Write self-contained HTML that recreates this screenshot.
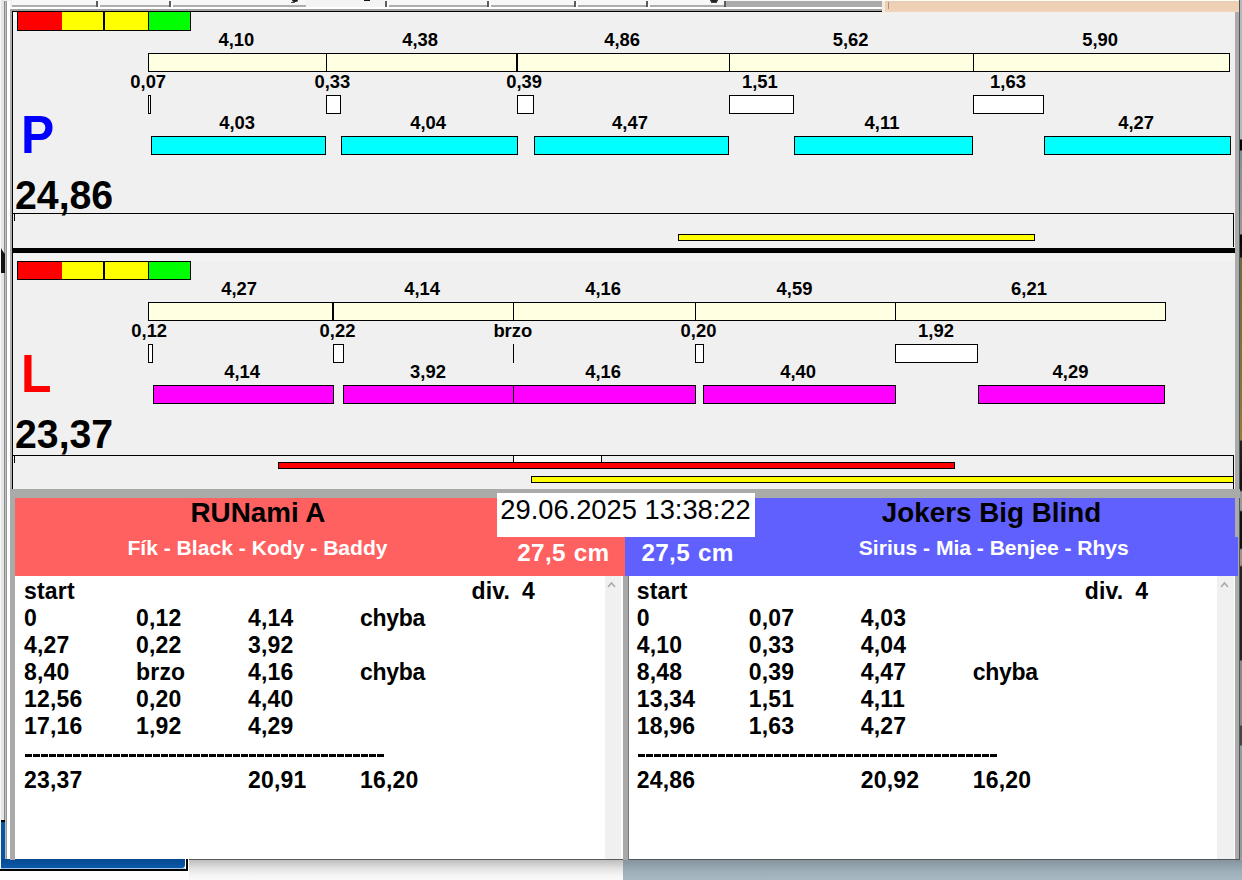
<!DOCTYPE html>
<html><head><meta charset="utf-8"><title>Flyball timing</title>
<style>
html,body{margin:0;padding:0;overflow:hidden}
body{width:1242px;height:880px;overflow:hidden;background:#f0f0f0;position:relative;font-family:"Liberation Sans",sans-serif;}
.t{position:absolute;white-space:pre;font-weight:bold;color:#000;line-height:1.15}
.sm{font-size:18.4px;transform:scaleX(1.0);}
.big{font-size:41px;transform-origin:0 0;transform:scaleX(0.957)}
.letter{font-size:53px;transform-origin:0 0;transform:scaleX(0.94)}
.title{font-size:27.8px}
.names{font-size:21.1px;color:#fff}
.cm{font-size:24.3px;color:#fff;letter-spacing:0.3px;word-spacing:1px}
.date{font-size:27.3px;font-weight:normal}
.body{font-size:23px;letter-spacing:0.2px;transform-origin:0 0;transform:scaleX(1.0);}
</style></head>
<body>
<div style="position:absolute;left:0px;top:0px;width:1px;height:880px;background:#f6f6f6;"></div>
<div style="position:absolute;left:1px;top:0px;width:3px;height:880px;background:#e6e6e6;"></div>
<div style="position:absolute;left:4px;top:1px;width:1px;height:859px;background:#8a8a8a;"></div>
<div style="position:absolute;left:5px;top:1px;width:1px;height:859px;background:#bdbdbd;"></div>
<div style="position:absolute;left:6px;top:1px;width:1px;height:859px;background:#999;"></div>
<div style="position:absolute;left:7px;top:1px;width:3px;height:859px;background:#fff;"></div>
<div style="position:absolute;left:10px;top:10px;width:2px;height:480px;background:#adadad;"></div>
<div style="position:absolute;left:12px;top:11px;width:1px;height:478px;background:#000;"></div>
<div style="position:absolute;left:1px;top:248px;width:4px;height:25px;background:#111;clip-path:polygon(0 0,40% 3px,100% 6px,100% 100%,0 100%)"></div>
<div style="position:absolute;left:12px;top:0px;width:870px;height:5px;background:#f7f7f7;"></div>
<div style="position:absolute;left:12px;top:5px;width:870px;height:2px;background:#adadad;"></div>
<div style="position:absolute;left:306px;top:0px;width:81px;height:7px;background:#f4f4f4;"></div>
<div style="position:absolute;left:96px;top:1px;width:2px;height:6px;background:#5c5c5c;"></div>
<div style="position:absolute;left:98px;top:1px;width:2px;height:6px;background:#fcfcfc;"></div>
<div style="position:absolute;left:169px;top:1px;width:2px;height:6px;background:#5c5c5c;"></div>
<div style="position:absolute;left:171px;top:1px;width:2px;height:6px;background:#fcfcfc;"></div>
<div style="position:absolute;left:385px;top:1px;width:2px;height:6px;background:#5c5c5c;"></div>
<div style="position:absolute;left:387px;top:1px;width:2px;height:6px;background:#fcfcfc;"></div>
<div style="position:absolute;left:487px;top:1px;width:2px;height:6px;background:#5c5c5c;"></div>
<div style="position:absolute;left:489px;top:1px;width:2px;height:6px;background:#fcfcfc;"></div>
<div style="position:absolute;left:574px;top:1px;width:2px;height:6px;background:#5c5c5c;"></div>
<div style="position:absolute;left:576px;top:1px;width:2px;height:6px;background:#fcfcfc;"></div>
<div style="position:absolute;left:646px;top:1px;width:2px;height:6px;background:#5c5c5c;"></div>
<div style="position:absolute;left:648px;top:1px;width:2px;height:6px;background:#fcfcfc;"></div>
<div style="position:absolute;left:724px;top:1px;width:2px;height:6px;background:#5c5c5c;"></div>
<div style="position:absolute;left:726px;top:1px;width:2px;height:6px;background:#fcfcfc;"></div>
<div style="position:absolute;left:726px;top:1px;width:156px;height:6px;background:#ababab;"></div>
<div style="position:absolute;left:10px;top:7px;width:872px;height:2px;background:#fff;"></div>
<div style="position:absolute;left:10px;top:9px;width:872px;height:2px;background:#a0a0a0;"></div>
<div style="position:absolute;left:12px;top:11px;width:870px;height:1px;background:#000;"></div>
<div style="position:absolute;left:292px;top:0px;width:6px;height:2px;background:#222;border-radius:0 0 3px 3px"></div>
<div style="position:absolute;left:291px;top:2px;width:4px;height:1px;background:#555;"></div>
<div style="position:absolute;left:364px;top:0px;width:6px;height:1px;background:#111;"></div>
<div style="position:absolute;left:710px;top:0px;width:8px;height:2px;background:#222;border-radius:0 0 4px 4px"></div>
<div style="position:absolute;left:711px;top:2px;width:6px;height:1px;background:#444;"></div>
<div style="position:absolute;left:882px;top:0px;width:358px;height:1px;background:#fffdf2;"></div>
<div style="position:absolute;left:882px;top:1px;width:3px;height:12px;background:#f6eadf;"></div>
<div style="position:absolute;left:885px;top:1px;width:355px;height:11px;background:#efd0b4;background:linear-gradient(#e6cdb8,#f0d0b2 40%,#efd0b4 80%,#ecd6c4)"></div>
<div style="position:absolute;left:883px;top:12px;width:357px;height:1px;background:#f8eee6;"></div>
<div style="position:absolute;left:888px;top:2px;width:1px;height:7px;background:#a89584;"></div>
<div style="position:absolute;left:1235px;top:12px;width:4px;height:848px;background:#ababab;"></div>
<div style="position:absolute;left:1239px;top:0px;width:1px;height:860px;background:#555;"></div>
<div style="position:absolute;left:1240px;top:0;width:2px;height:880px;background:linear-gradient(#b0b8c0 0,#b0b8c0 139px,#000 140px,#000 150px,#7890a0 151px,#8a9098 170px,#999 234px,#000 235px,#111 257px,#6e6840 258px,#807840 400px,#908030 440px,#222 441px,#111 490px,#999 492px,#999 510px,#111 512px,#111 548px,#a09090 550px,#a09090 565px,#222 567px,#222 660px,#888 661px,#888 725px,#444 726px,#444 745px,#909aa0 746px,#909aa0 858px,#98a8b4 860px,#a5b5c0 880px)"></div>
<div style="position:absolute;left:5px;top:859px;width:618px;height:1px;background:#5a5a5a;"></div>
<div style="position:absolute;left:0;top:860px;width:623px;height:20px;background:linear-gradient(#bebebe,#e4e4e4 45%,#f6f6f6 80%,#fafafa)"></div>
<div style="position:absolute;left:623px;top:859px;width:617px;height:1px;background:#555;"></div>
<div style="position:absolute;left:623px;top:860px;width:619px;height:20px;background:linear-gradient(#86949e,#9fb0bb 60%,#a7b7c2)"></div>
<div style="position:absolute;left:0px;top:871px;width:189px;height:10px;background:#fefcfc;"></div>
<div style="position:absolute;left:0px;top:859px;width:189px;height:12px;background:#fff;"></div>
<div style="position:absolute;left:1px;top:820px;width:4px;height:2px;background:#000;"></div>
<div style="position:absolute;left:1px;top:822px;width:4px;height:47px;background:#0b54a3;"></div>
<div style="position:absolute;left:1px;top:859px;width:184px;height:9px;background:#0b54a3;background:linear-gradient(#064a90,#0c58aa);border-radius:0 0 3px 0"></div>
<div style="position:absolute;left:1px;top:868px;width:184px;height:1px;background:#9cc4f0;"></div>
<div style="position:absolute;left:0px;top:869px;width:188px;height:2px;background:#000;"></div>
<div style="position:absolute;left:186px;top:859px;width:2px;height:12px;background:#000;"></div>
<div style="position:absolute;left:13px;top:12px;width:4px;height:8px;background:#fafafa;"></div>
<div style="position:absolute;left:17px;top:11px;width:174px;height:20px;background:#000;"></div>
<div style="position:absolute;left:18px;top:12px;width:44px;height:18px;background:#ff0000;"></div>
<div style="position:absolute;left:62px;top:12px;width:41px;height:18px;background:#ffff00;"></div>
<div style="position:absolute;left:105px;top:12px;width:43px;height:18px;background:#ffff00;"></div>
<div style="position:absolute;left:149px;top:12px;width:41px;height:18px;background:#00ff00;"></div>
<div style="position:absolute;left:148px;top:53px;width:1080px;height:17px;background:#ffffe1;border:1px solid #000;"></div>
<div style="position:absolute;left:326px;top:53px;width:1px;height:19px;background:#000;"></div>
<div style="position:absolute;left:516px;top:53px;width:2px;height:19px;background:#000;"></div>
<div style="position:absolute;left:729px;top:53px;width:1px;height:19px;background:#000;"></div>
<div style="position:absolute;left:973px;top:53px;width:1px;height:19px;background:#000;"></div>
<div class="t sm" style="left:86.4px;top:29px;width:300px;text-align:center;">4,10</div>
<div class="t sm" style="left:270.2px;top:29px;width:300px;text-align:center;">4,38</div>
<div class="t sm" style="left:472.20000000000005px;top:29px;width:300px;text-align:center;">4,86</div>
<div class="t sm" style="left:700.6px;top:29px;width:300px;text-align:center;">5,62</div>
<div class="t sm" style="left:950.2px;top:29px;width:300px;text-align:center;">5,90</div>
<div style="position:absolute;left:148px;top:95px;width:1px;height:17px;background:#fff;border:1px solid #000;"></div>
<div style="position:absolute;left:326px;top:95px;width:13px;height:17px;background:#fff;border:1px solid #000;"></div>
<div style="position:absolute;left:517px;top:95px;width:15px;height:17px;background:#fff;border:1px solid #000;"></div>
<div style="position:absolute;left:729px;top:95px;width:63px;height:17px;background:#fff;border:1px solid #000;"></div>
<div style="position:absolute;left:973px;top:95px;width:69px;height:17px;background:#fff;border:1px solid #000;"></div>
<div class="t sm" style="left:-1.8000000000000114px;top:71px;width:300px;text-align:center;">0,07</div>
<div class="t sm" style="left:182.39999999999998px;top:71px;width:300px;text-align:center;">0,33</div>
<div class="t sm" style="left:374.20000000000005px;top:71px;width:300px;text-align:center;">0,39</div>
<div class="t sm" style="left:609.9px;top:71px;width:300px;text-align:center;">1,51</div>
<div class="t sm" style="left:858px;top:71px;width:300px;text-align:center;">1,63</div>
<div style="position:absolute;left:151px;top:136px;width:173px;height:17px;background:#00ffff;border:1px solid #000;"></div>
<div style="position:absolute;left:341px;top:136px;width:175px;height:17px;background:#00ffff;border:1px solid #000;"></div>
<div style="position:absolute;left:534px;top:136px;width:193px;height:17px;background:#00ffff;border:1px solid #000;"></div>
<div style="position:absolute;left:794px;top:136px;width:177px;height:17px;background:#00ffff;border:1px solid #000;"></div>
<div style="position:absolute;left:1044px;top:136px;width:185px;height:17px;background:#00ffff;border:1px solid #000;"></div>
<div class="t sm" style="left:87.19999999999999px;top:112px;width:300px;text-align:center;">4,03</div>
<div class="t sm" style="left:278.2px;top:112px;width:300px;text-align:center;">4,04</div>
<div class="t sm" style="left:480px;top:112px;width:300px;text-align:center;">4,47</div>
<div class="t sm" style="left:732px;top:112px;width:300px;text-align:center;">4,11</div>
<div class="t sm" style="left:986.2px;top:112px;width:300px;text-align:center;">4,27</div>
<div class="t letter" style="left:20.7px;top:104.7px;color:#0000ff">P</div>
<div class="t big" style="left:15.3px;top:172.1px;">24,86</div>
<div style="position:absolute;left:17px;top:261px;width:174px;height:19px;background:#000;"></div>
<div style="position:absolute;left:18px;top:262px;width:44px;height:17px;background:#ff0000;"></div>
<div style="position:absolute;left:62px;top:262px;width:41px;height:17px;background:#ffff00;"></div>
<div style="position:absolute;left:105px;top:262px;width:43px;height:17px;background:#ffff00;"></div>
<div style="position:absolute;left:149px;top:262px;width:41px;height:17px;background:#00ff00;"></div>
<div style="position:absolute;left:148px;top:302px;width:1016px;height:17px;background:#ffffe1;border:1px solid #000;"></div>
<div style="position:absolute;left:332px;top:302px;width:2px;height:19px;background:#000;"></div>
<div style="position:absolute;left:513px;top:302px;width:1px;height:19px;background:#000;"></div>
<div style="position:absolute;left:695px;top:302px;width:1px;height:19px;background:#000;"></div>
<div style="position:absolute;left:895px;top:302px;width:1px;height:19px;background:#000;"></div>
<div class="t sm" style="left:89.19999999999999px;top:278px;width:300px;text-align:center;">4,27</div>
<div class="t sm" style="left:272.2px;top:278px;width:300px;text-align:center;">4,14</div>
<div class="t sm" style="left:453.20000000000005px;top:278px;width:300px;text-align:center;">4,16</div>
<div class="t sm" style="left:644.5px;top:278px;width:300px;text-align:center;">4,59</div>
<div class="t sm" style="left:879px;top:278px;width:300px;text-align:center;">6,21</div>
<div style="position:absolute;left:148px;top:344px;width:3px;height:17px;background:#fff;border:1px solid #000;"></div>
<div style="position:absolute;left:333px;top:344px;width:9px;height:17px;background:#fff;border:1px solid #000;"></div>
<div style="position:absolute;left:513px;top:344px;width:1px;height:19px;background:#000;"></div>
<div style="position:absolute;left:695px;top:344px;width:7px;height:17px;background:#fff;border:1px solid #000;"></div>
<div style="position:absolute;left:895px;top:344px;width:81px;height:17px;background:#fff;border:1px solid #000;"></div>
<div class="t sm" style="left:-0.8000000000000114px;top:320px;width:300px;text-align:center;">0,12</div>
<div class="t sm" style="left:187.5px;top:320px;width:300px;text-align:center;">0,22</div>
<div class="t sm" style="left:362.79999999999995px;top:320px;width:300px;text-align:center;">brzo</div>
<div class="t sm" style="left:548.5px;top:320px;width:300px;text-align:center;">0,20</div>
<div class="t sm" style="left:786px;top:320px;width:300px;text-align:center;">1,92</div>
<div style="position:absolute;left:153px;top:385px;width:179px;height:17px;background:#ff00ff;border:1px solid #000;"></div>
<div style="position:absolute;left:343px;top:385px;width:169px;height:17px;background:#ff00ff;border:1px solid #000;"></div>
<div style="position:absolute;left:513px;top:385px;width:181px;height:17px;background:#ff00ff;border:1px solid #000;"></div>
<div style="position:absolute;left:703px;top:385px;width:191px;height:17px;background:#ff00ff;border:1px solid #000;"></div>
<div style="position:absolute;left:978px;top:385px;width:185px;height:17px;background:#ff00ff;border:1px solid #000;"></div>
<div class="t sm" style="left:92.19999999999999px;top:361px;width:300px;text-align:center;">4,14</div>
<div class="t sm" style="left:278px;top:361px;width:300px;text-align:center;">3,92</div>
<div class="t sm" style="left:453.20000000000005px;top:361px;width:300px;text-align:center;">4,16</div>
<div class="t sm" style="left:648.2px;top:361px;width:300px;text-align:center;">4,40</div>
<div class="t sm" style="left:920.5px;top:361px;width:300px;text-align:center;">4,29</div>
<div class="t letter" style="left:20.7px;top:343.8px;color:#ff0000">L</div>
<div class="t big" style="left:15.3px;top:411.4px;">23,37</div>
<div style="position:absolute;left:13px;top:213px;width:1221px;height:1px;background:#000;"></div>
<div style="position:absolute;left:1233px;top:213px;width:1px;height:34px;background:#000;"></div>
<div style="position:absolute;left:14px;top:213px;width:1px;height:8px;background:#000;"></div>
<div style="position:absolute;left:678px;top:234px;width:355px;height:5px;background:#ffff00;border:1px solid #000;"></div>
<div style="position:absolute;left:13px;top:248px;width:1222px;height:5px;background:#000;"></div>
<div style="position:absolute;left:13px;top:254px;width:1222px;height:7px;background:#f3f3f3;"></div>
<div style="position:absolute;left:13px;top:455px;width:1221px;height:1px;background:#000;"></div>
<div style="position:absolute;left:1233px;top:455px;width:1px;height:34px;background:#000;"></div>
<div style="position:absolute;left:14px;top:455px;width:1px;height:8px;background:#000;"></div>
<div style="position:absolute;left:513px;top:455px;width:87px;height:6px;background:#fff;border:1px solid #000;"></div>
<div style="position:absolute;left:278px;top:462px;width:675px;height:5px;background:#ff0000;border:1px solid #000;"></div>
<div style="position:absolute;left:531px;top:476px;width:701px;height:5px;background:#ffff00;border:1px solid #000;"></div>
<div style="position:absolute;left:10px;top:489px;width:1230px;height:9px;background:#a9aba8;"></div>
<div style="position:absolute;left:10px;top:489px;width:5px;height:371px;background:#a9aba8;"></div>
<div style="position:absolute;left:15px;top:498px;width:610px;height:78px;background:#ff6060;"></div>
<div style="position:absolute;left:625px;top:498px;width:610px;height:78px;background:#6060ff;"></div>
<div style="position:absolute;left:1235px;top:537px;width:3px;height:39px;background:#6060ff;"></div>
<div style="position:absolute;left:497px;top:493px;width:258px;height:44px;background:#fff;"></div>
<div class="t date" style="left:475.5px;top:493.5px;width:300px;text-align:center;">29.06.2025 13:38:22</div>
<div class="t title" style="left:108px;top:497.4px;width:300px;text-align:center;">RUNami A</div>
<div class="t title" style="left:841.5px;top:497.4px;width:300px;text-align:center;">Jokers Big Blind</div>
<div class="t names" style="left:107.5px;top:536.4px;width:300px;text-align:center;">Fík - Black - Kody - Baddy</div>
<div class="t names" style="left:843.8px;top:536.4px;width:300px;text-align:center;letter-spacing:-0.03px">Sirius - Mia - Benjee - Rhys</div>
<div class="t cm" style="left:413.4px;top:539.3px;width:300px;text-align:center;">27,5 cm</div>
<div class="t cm" style="left:537.6px;top:539.3px;width:300px;text-align:center;">27,5 cm</div>
<div style="position:absolute;left:15px;top:576px;width:590px;height:283px;background:#fff;"></div>
<div style="position:absolute;left:605px;top:576px;width:16px;height:283px;background:#f0f0f0;"></div>
<div style="position:absolute;left:621px;top:576px;width:2px;height:283px;background:#fff;"></div>
<div style="position:absolute;left:623px;top:576px;width:6px;height:284px;background:#a9a9a9;"></div>
<div style="position:absolute;left:628px;top:576px;width:1px;height:284px;background:#777;"></div>
<div style="position:absolute;left:629px;top:576px;width:588px;height:283px;background:#fff;"></div>
<div style="position:absolute;left:1217px;top:576px;width:17px;height:283px;background:#f0f0f0;"></div>
<div style="position:absolute;left:1234px;top:576px;width:1px;height:283px;background:#fff;"></div>
<svg style="position:absolute;left:606.2px;top:580px" width="12" height="10" viewBox="0 0 12 10"><path d="M2 7 L5.5 3 L9 7" fill="none" stroke="#a8a8a8" stroke-width="1.5"/></svg>
<svg style="position:absolute;left:1219px;top:580px" width="12" height="10" viewBox="0 0 12 10"><path d="M2 7 L5.5 3 L9 7" fill="none" stroke="#a8a8a8" stroke-width="1.5"/></svg>
<div class="t body" style="left:24px;top:577.8px;">start</div>
<div class="t body" style="left:24px;top:604.8px;">0</div>
<div class="t body" style="left:136px;top:604.8px;">0,12</div>
<div class="t body" style="left:248px;top:604.8px;">4,14</div>
<div class="t body" style="left:360px;top:604.8px;letter-spacing:-0.3px">chyba</div>
<div class="t body" style="left:24px;top:631.8px;">4,27</div>
<div class="t body" style="left:136px;top:631.8px;">0,22</div>
<div class="t body" style="left:248px;top:631.8px;">3,92</div>
<div class="t body" style="left:24px;top:658.8px;">8,40</div>
<div class="t body" style="left:136px;top:658.8px;">brzo</div>
<div class="t body" style="left:248px;top:658.8px;">4,16</div>
<div class="t body" style="left:360px;top:658.8px;letter-spacing:-0.3px">chyba</div>
<div class="t body" style="left:24px;top:685.8px;">12,56</div>
<div class="t body" style="left:136px;top:685.8px;">0,20</div>
<div class="t body" style="left:248px;top:685.8px;">4,40</div>
<div class="t body" style="left:24px;top:712.8px;">17,16</div>
<div class="t body" style="left:136px;top:712.8px;">1,92</div>
<div class="t body" style="left:248px;top:712.8px;">4,29</div>
<div style="position:absolute;left:25px;top:754px;width:359px;height:3px;background:repeating-linear-gradient(90deg,#000 0,#000 6.8px,transparent 6.8px,transparent 8px)"></div>
<div class="t body" style="left:24px;top:766.8px;">23,37</div>
<div class="t body" style="left:248px;top:766.8px;">20,91</div>
<div class="t body" style="left:360px;top:766.8px;">16,20</div>
<div class="t body" style="left:471.5px;top:577.8px;">div.</div>
<div class="t body" style="left:522.0px;top:577.8px;">4</div>
<div class="t body" style="left:636.7px;top:577.8px;">start</div>
<div class="t body" style="left:636.7px;top:604.8px;">0</div>
<div class="t body" style="left:748.7px;top:604.8px;">0,07</div>
<div class="t body" style="left:860.7px;top:604.8px;">4,03</div>
<div class="t body" style="left:636.7px;top:631.8px;">4,10</div>
<div class="t body" style="left:748.7px;top:631.8px;">0,33</div>
<div class="t body" style="left:860.7px;top:631.8px;">4,04</div>
<div class="t body" style="left:636.7px;top:658.8px;">8,48</div>
<div class="t body" style="left:748.7px;top:658.8px;">0,39</div>
<div class="t body" style="left:860.7px;top:658.8px;">4,47</div>
<div class="t body" style="left:972.7px;top:658.8px;letter-spacing:-0.3px">chyba</div>
<div class="t body" style="left:636.7px;top:685.8px;">13,34</div>
<div class="t body" style="left:748.7px;top:685.8px;">1,51</div>
<div class="t body" style="left:860.7px;top:685.8px;">4,11</div>
<div class="t body" style="left:636.7px;top:712.8px;">18,96</div>
<div class="t body" style="left:748.7px;top:712.8px;">1,63</div>
<div class="t body" style="left:860.7px;top:712.8px;">4,27</div>
<div style="position:absolute;left:637.7px;top:754px;width:359px;height:3px;background:repeating-linear-gradient(90deg,#000 0,#000 6.8px,transparent 6.8px,transparent 8px)"></div>
<div class="t body" style="left:636.7px;top:766.8px;">24,86</div>
<div class="t body" style="left:860.7px;top:766.8px;">20,92</div>
<div class="t body" style="left:972.7px;top:766.8px;">16,20</div>
<div class="t body" style="left:1084.7px;top:577.8px;">div.</div>
<div class="t body" style="left:1135.2px;top:577.8px;">4</div>
</body></html>
